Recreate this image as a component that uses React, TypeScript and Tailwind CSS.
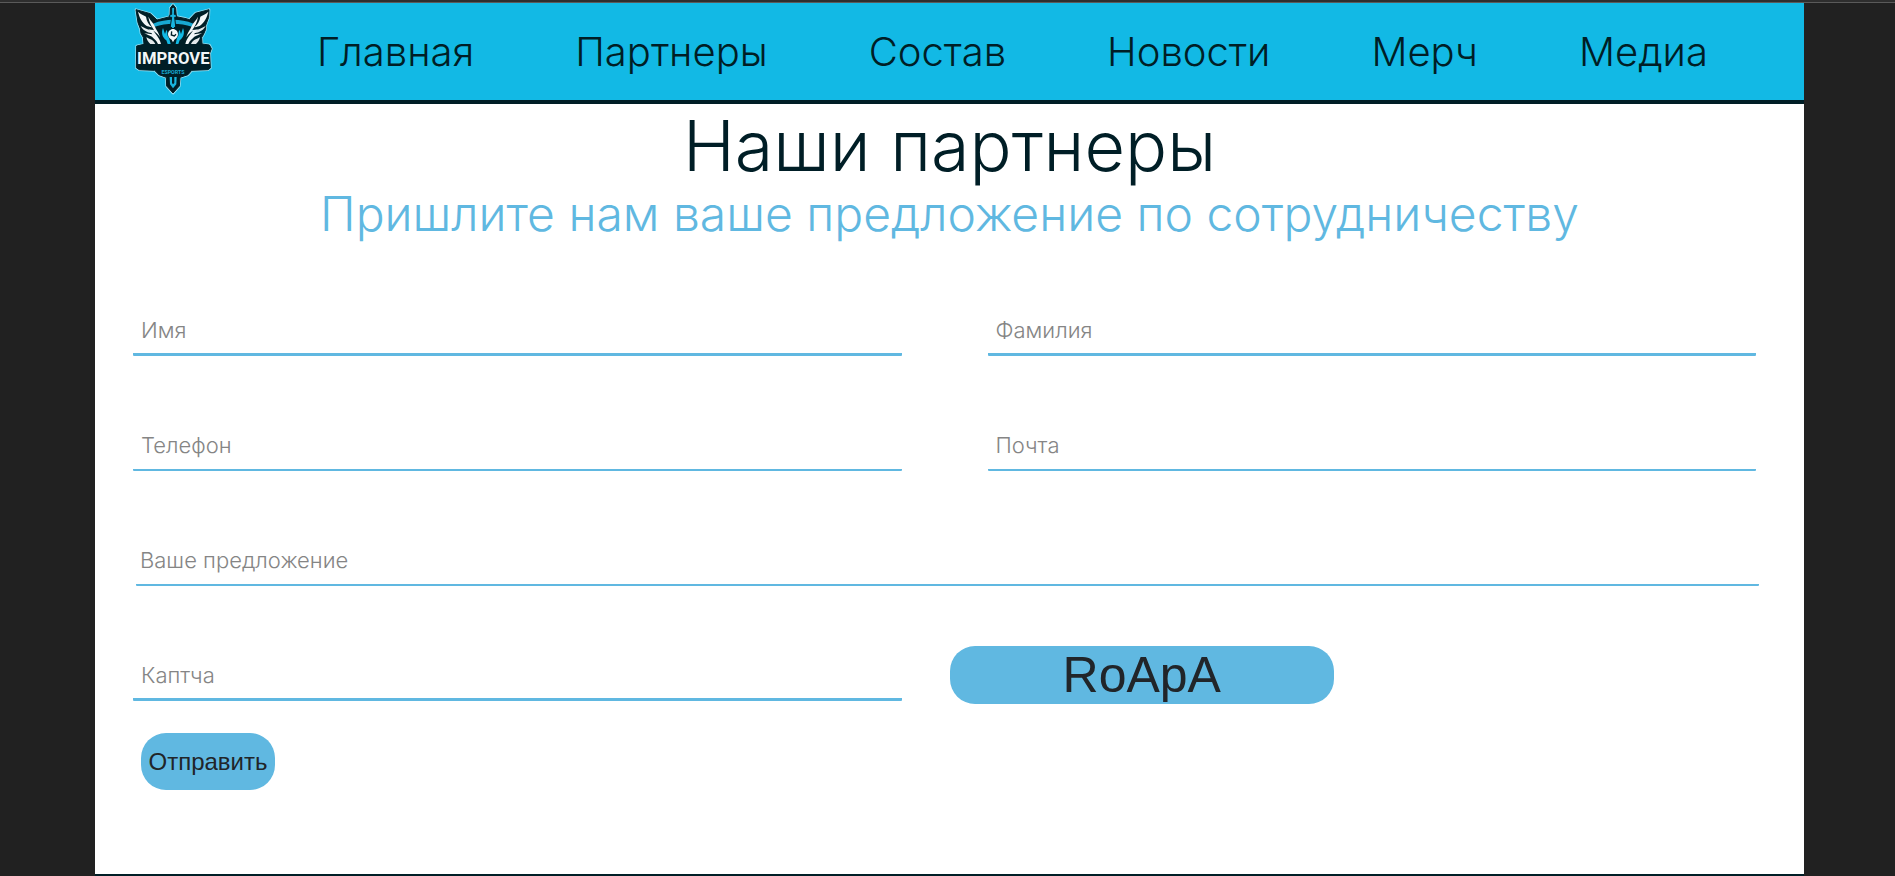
import React from "react";

const NAV = ["Главная", "Партнеры", "Состав", "Новости", "Мерч", "Медиа"];

const SHIELD =
  "M279 14 L287 24 L289 50 L318 56 L328 59 L346 40 L387 29 L386 52 L377 76 L377 88 L370 104 L365 112 L366 132 L388 135 L394 146 L389 160 L391 204 L384 209 L335 211 L324 224 L300 232 L298 258 L279 279 L260 258 L259 232 L237 224 L224 211 L178 209 L169 203 L170 138 L192 133 L190 112 L183 100 L181 86 L174 68 L168 29 L211 41 L231 60 L270 50 L271 24 Z";

function Wing() {
  return (
    <>
      <path d="M174 35 C182 43 192 46 198 50 C200 64 206 74 216 82 C208 80 203 79 199 77 C186 68 178 52 174 35 Z" fill="#f3f7f8" />
      <path d="M182 78 C192 84 203 87 211 92 L217 99 C212 99 206 98 202 96 C192 92 186 86 182 78 Z" fill="#e3e9eb" />
      <path d="M205 50 C211 62 220 68 225 80 C228 89 236 96 240 112 C234 102 226 97 219 91 C226 102 238 112 243 132 L234 132 C230 122 223 117 216 110 C208 106 200 104 193 99 C203 101 209 102 217 103 L205 88 L214 89 L222 90 C214 78 207 66 205 50 Z" fill="#f3f7f8" />
      <path d="M199 112 C208 117 220 119 226 132 L211 132 C205 127 201 120 199 112 Z" fill="#e3e9eb" />
    </>
  );
}

function Logo() {
  return (
    <svg viewBox="159 9 240 276" className="h-[92px] w-20" role="img" aria-label="Improve Esports">
      <path d={SHIELD} fill="#001e26" stroke="#8fdcf0" strokeWidth="8" strokeLinejoin="round" />
      <path d={SHIELD} fill="#001e26" stroke="#001e26" strokeWidth="3" strokeLinejoin="round" />
      <path d="M219 71 C240 62 260 59 279 59 C300 59 320 62 340 71 L336 80 C300 68 260 68 224 80 Z" fill="#18a9d2" />
      <Wing />
      <g transform="translate(559 0) scale(-1 1)">
        <Wing />
      </g>
      <path d="M275 26 L279 20 L284 26 L283 43 L290 46 L290 51 L284 52 L287 79 L279 87 L271 79 L275 52 L268 51 L268 46 L275 43 Z" fill="#18b5df" stroke="#001e26" strokeWidth="3" />
      <path d="M249 84 C243 99 247 112 259 121 L263 132 L272 132 L267 113 C259 108 265 96 259 90 L255 102 Z M309 84 C315 99 311 112 299 121 L295 132 L287 132 L291 113 C299 108 293 96 299 90 L303 102 Z" fill="#12b9e5" />
      <path d="M279 87 C287 87 294 94 294 103 C294 110 289 116 283 119 L279 127 L275 119 C269 116 264 110 264 103 C264 94 271 87 279 87 Z" fill="#f3f7f8" />
      <path d="M275 94 L274 105 L283 108 L288 103" fill="none" stroke="#001e26" strokeWidth="4" />
      <text x="280" y="191" textAnchor="middle" fontFamily="Roboto, sans-serif" fontWeight="700" fontSize="50" fill="#f3f7f8">
        IMPROVE
      </text>
      <text x="279" y="222" textAnchor="middle" fontFamily="Roboto, sans-serif" fontWeight="700" fontSize="16" fill="#18a9d2">
        ESPORTS
      </text>
      <path d="M269 231 L276 231 L276 249 L279 253 L283 249 L283 231 L290 231 L289 253 L279 265 L270 253 Z" fill="#18b5df" />
    </svg>
  );
}

type FieldProps = {
  id: string;
  label: string;
  type?: string;
  thick?: boolean;
  wide?: boolean;
};

function Field({ id, label, type = "text", thick = false, wide = false }: FieldProps) {
  return (
    <div
      className={
        "grid h-[115px] grid-cols-1 content-start " +
        (wide ? "col-span-2 pr-[45px] pl-[41px]" : "pr-12 pl-[38px]")
      }
    >
      <input
        id={id}
        type={type}
        placeholder=" "
        className={
          "peer col-start-1 row-start-1 h-[52px] w-full rounded-[1px] border-[#60b8e1] bg-transparent pt-1 text-[22px] font-light text-[#212529] outline-none " +
          (thick ? "border-b-3 " : "border-b-2 ") +
          (wide ? "px-1" : "px-2")
        }
      />
      <label
        htmlFor={id}
        className={
          "pointer-events-none col-start-1 row-start-1 pt-[10px] text-[22px] leading-8 font-light text-[#858585] peer-[:not(:placeholder-shown)]:invisible " +
          (wide ? "px-1" : "px-2")
        }
      >
        {label}
      </label>
    </div>
  );
}

export default function App() {
  return (
    <div className="flex min-h-screen flex-col bg-[#212121] font-['Inter','Noto_Sans',sans-serif]">
      <div className="h-[3px] border-b border-[#5a5a5a] bg-[#2e2e2e]" />
      <div className="mr-[91px] ml-[95px] flex grow flex-col border-b-2 border-[#001e26] bg-white">
        <header className="flex h-[101px] items-start border-b-4 border-[#001e26] bg-[#12b9e5] pr-24 pl-[38px]">
          <a href="#home" className="mr-[104px] shrink-0">
            <Logo />
          </a>
          <nav className="flex grow justify-between self-center text-[40px] leading-[48px] font-light text-[#001e26]">
            {NAV.map((item) => (
              <a key={item} href="#">
                {item}
              </a>
            ))}
          </nav>
        </header>
        <main>
          <h1 className="pt-0.5 text-center text-[70px] leading-[80px] font-light text-[#001e26]">Наши партнеры</h1>
          <h2 className="text-center text-[48px] leading-[56px] font-light text-[#60b8e1]">
            Пришлите нам ваше предложение по сотрудничеству
          </h2>
          <form className="grid grid-cols-2 pt-[62px]" onSubmit={(e) => e.preventDefault()}>
            <Field id="name" label="Имя" thick />
            <Field id="surname" label="Фамилия" thick />
            <Field id="phone" label="Телефон" type="tel" />
            <Field id="email" label="Почта" type="email" />
            <Field id="offer" label="Ваше предложение" wide />
            <Field id="captcha" label="Каптча" thick />
            <div>
              <output
                htmlFor="captcha"
                className="-mt-[3px] flex h-[58px] w-[45%] items-center justify-center rounded-[25px] bg-[#60b8e1] font-['Liberation_Sans',sans-serif] text-[50px] text-[#212529]"
              >
                RoApA
              </output>
            </div>
            <button
              type="submit"
              className="-mt-[31px] ml-[46px] h-[57px] w-[134px] rounded-[25px] bg-[#60b8e1] font-['Liberation_Sans',sans-serif] text-2xl text-[#212529]"
            >
              Отправить
            </button>
          </form>
        </main>
      </div>
    </div>
  );
}
